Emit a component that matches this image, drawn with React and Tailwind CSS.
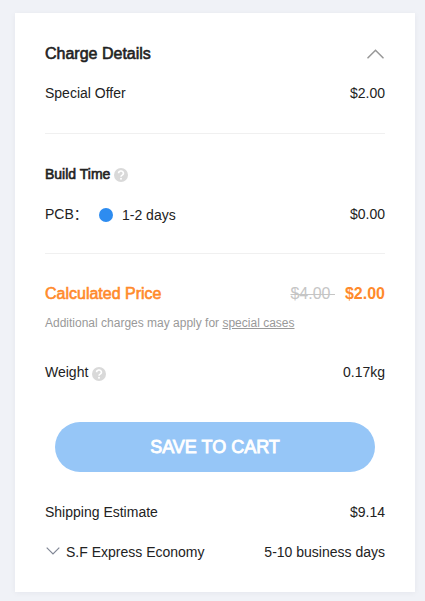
import React from 'react';

const HelpIcon = ({ className = 'mt-[2px]' }) => (
  <svg width="14" height="14" viewBox="0 0 14 14" className={`shrink-0 ${className}`}>
    <circle cx="7" cy="7" r="7" fill="#d9d9d9" />
    <path d="M4.6 5.3a2.4 2.2 0 1 1 3.6 1.8c-.9.5-1.2.8-1.2 1.7" fill="none" stroke="#fff" strokeWidth="1.6" />
    <circle cx="7" cy="10.8" r="1" fill="#fff" />
  </svg>
);

const Row = ({ label, value, className = '' }) => (
  <div className={`flex items-center justify-between h-5 ${className}`}>
    <div className="flex items-center">{label}</div>
    <div>{value}</div>
  </div>
);

const App = () => {
  return (
    <div className="h-[601px] bg-[#f0f2f7] pt-[13px] pl-[15px] pr-[10px] font-['Liberation_Sans',Arial,sans-serif] text-sm text-[#222]">
      <div className="h-[579px] bg-white px-[30px] pt-[30px] shadow-[0_1px_6px_rgba(0,0,50,0.05)]">
        <Row
          className="text-base"
          label={<span className="mt-px [-webkit-text-stroke:0.6px]">Charge Details</span>}
          value={
            <svg width="18" height="10" viewBox="0 0 18 10" fill="none" stroke="#999" strokeWidth="1.6" strokeLinecap="round" className="mt-[2px]">
              <path d="M1 8.8L8.5 1.3l7.5 7.5" />
            </svg>
          }
        />
        <Row className="mt-5" label="Special Offer" value="$2.00" />
        <div className="mt-[30px] border-t border-[#f0f0f0]" />

        <Row
          className="mt-[30px]"
          label={
            <>
              <span className="mr-1 [-webkit-text-stroke:0.6px]">Build Time</span>
              <HelpIcon />
            </>
          }
        />
        <Row
          className="mt-5"
          label={
            <>
              <span className="w-[54px] font-['Liberation_Sans','Noto_Sans_CJK_SC',sans-serif]">PCB：</span>
              <span className="w-[14px] h-[14px] rounded-full bg-[#2d8cf0] mr-[9px] mt-[2px]" />
              <span className="mt-[2px]">1-2 days</span>
            </>
          }
          value="$0.00"
        />
        <div className="mt-[29px] border-t border-[#f0f0f0]" />

        <Row
          className="mt-[30px] text-base text-[#ff8a2b]"
          label={<span className="[-webkit-text-stroke:0.6px]">Calculated Price</span>}
          value={
            <>
              <span className="text-[#c5c5c5] line-through mr-[10px] whitespace-pre">$4.00 </span>
              <span className="font-bold">$2.00</span>
            </>
          }
        />
        <p className="mt-[9px] text-xs leading-5 text-[#999]">
          Additional charges may apply for <span className="underline">special cases</span>
        </p>
        <Row
          className="mt-[29px]"
          label={
            <>
              <span className="mr-1">Weight</span>
              <HelpIcon className="mt-[4px]" />
            </>
          }
          value="0.17kg"
        />

        <button className="block w-[320px] h-[50px] mt-10 mx-auto rounded-full bg-[#96c6f7] text-white text-lg [-webkit-text-stroke:0.9px]">
          SAVE TO CART
        </button>

        <Row className="mt-[30px]" label="Shipping Estimate" value="$9.14" />
        <Row
          className="mt-5"
          label={
            <>
              <svg width="14" height="8" viewBox="0 0 14 8" fill="none" stroke="#808695" strokeWidth="1.2" className="ml-px mr-[6px] -mt-[2px]">
                <path d="M.7.7L7 7 13.3.7" />
              </svg>
              <span>S.F Express Economy</span>
            </>
          }
          value="5-10 business days"
        />
      </div>
    </div>
  );
};

export default App;
